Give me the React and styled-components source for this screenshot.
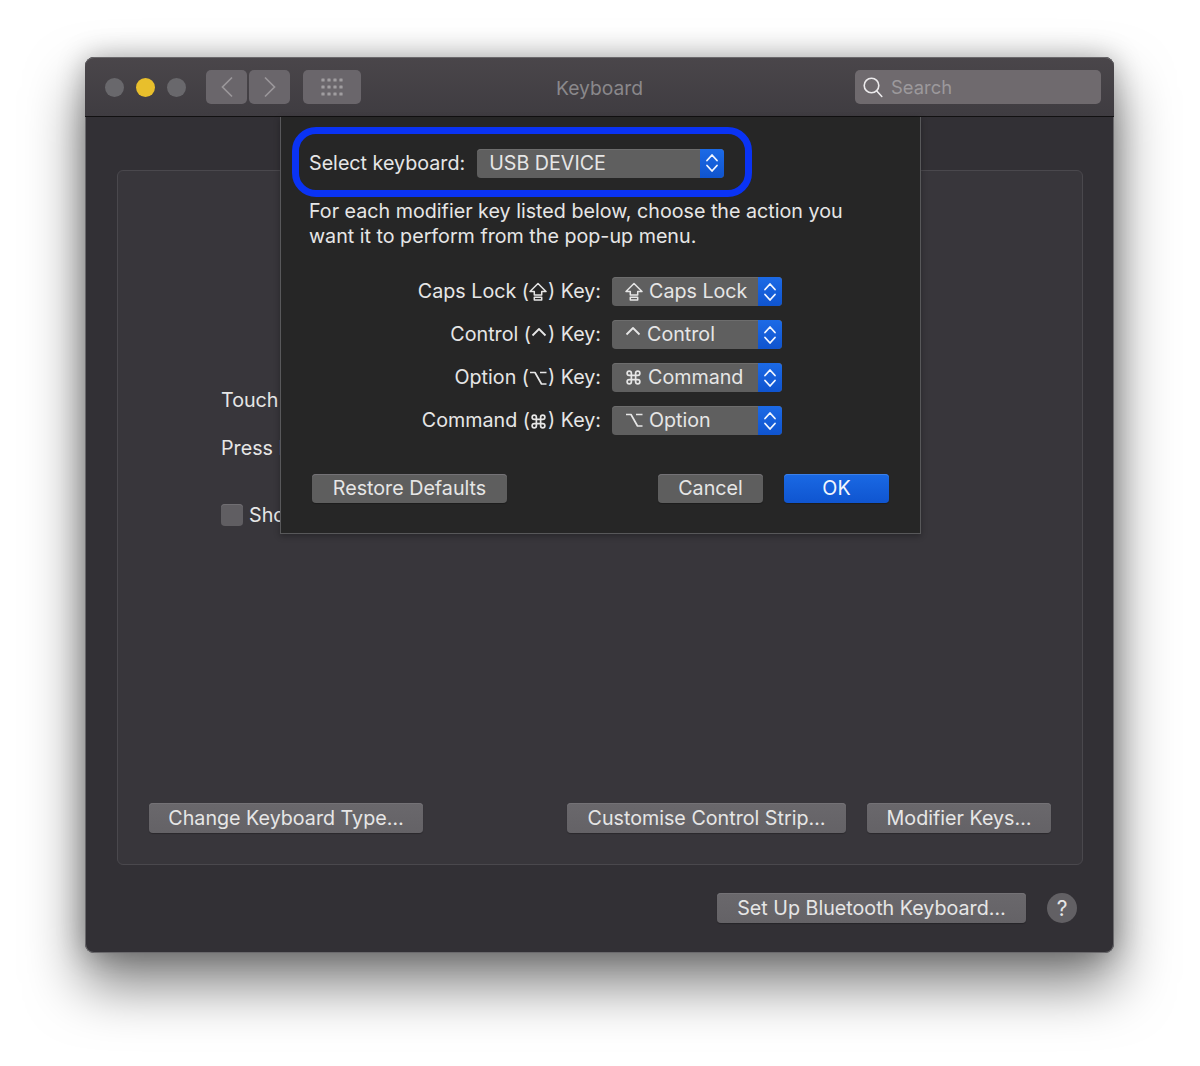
import React from "react";
import styled, { createGlobalStyle } from "styled-components";

const Global = createGlobalStyle`
  html, body { margin: 0; padding: 0; background: #fff; }
  body { font-family: Inter, "Noto Sans", "DejaVu Sans", sans-serif; -webkit-font-smoothing: antialiased; }
`;
const Page = styled.div`
  width: 1200px; height: 1066px; padding: 57px 0 0 85px; box-sizing: border-box; overflow: hidden;
`;
const Window = styled.div`
  position: relative; width: 1029px; height: 896px; box-sizing: border-box;
  display: flex; flex-direction: column;
  border-radius: 9px; background: #323035;
  box-shadow: 0 0 0 1px #6a696c inset, 0 30px 55px 2px rgba(0,0,0,.5), 0 0 28px rgba(0,0,0,.28);
  color: #e6e6e6; font-size: 19.7px;
`;
const TitleBar = styled.div`
  height: 60px; box-sizing: border-box; flex: none; position: relative;
  display: flex; align-items: center; padding: 1px 13px 0 20px;
  background: linear-gradient(180deg, #4a464a 0%, #3f3c41 100%);
  border-radius: 9px 9px 0 0; border-bottom: 1px solid #121112;
  box-shadow: inset 0 1px 0 #6a686b;
`;
const Lights = styled.div`display: flex; gap: 12px; margin-right: 20px;`;
const Light = styled.span`
  width: 19px; height: 19px; border-radius: 50%; background: ${p => p.$c};
`;
const NavGroup = styled.div`display: flex; gap: 2px; margin-right: 13px;`;
const ToolButton = styled.div`
  width: ${p => p.$w}px; height: 34px; border-radius: 5px; background: #6a666b;
  display: flex; align-items: center; justify-content: center;
`;
const Title = styled.div`
  position: absolute; left: 0; right: 0; top: 2px; bottom: 0; display: flex; align-items: center; justify-content: center;
  color: #8a888b; font-size: 19.3px; pointer-events: none;
`;
const SearchBox = styled.div`
  margin-left: auto; width: 246px; height: 34px; box-sizing: border-box; padding-left: 8px; border-radius: 5px; background: #6f6a6e;
  display: flex; align-items: center; gap: 8px; color: #9c999c; font-size: 18.4px;
`;
const Body = styled.div`flex: 1; padding: 53px 31px 0 32px; display: flex; flex-direction: column;`;
const Panel = styled.div`
  height: 695px; box-sizing: border-box; padding: 217px 31px 31px; flex: none;
  display: flex; flex-direction: column; border-radius: 6px;
  background: #38363b; border: 1px solid #4a484d;
`;
const SettingRow = styled.div`
  display: flex; align-items: center; gap: 6px; height: 24px; margin: ${p => p.$mt}px 0 0 72px; white-space: nowrap;
`;
const Checkbox = styled.span`
  width: 22px; height: 22px; border-radius: 4px; background: #605e62; box-shadow: inset 0 1px 0 #706e72;
`;
const ButtonRow = styled.div`display: flex; gap: 21px; margin-top: auto;`;
const Btn = styled.div`
  width: ${p => p.$w}px; height: ${p => p.$h || 30}px; flex: none; margin-left: ${p => p.$ml || 0};
  box-sizing: border-box; padding-bottom: ${p => p.$h ? 1 : 0}px;
  display: flex; align-items: center; justify-content: center; border-radius: 4px; white-space: nowrap;
  background: ${p => p.$primary ? "linear-gradient(180deg,#1a69e4,#0f55d0)" : p.$onDialog ? "#5e5e5e" : "linear-gradient(180deg,#6a686c,#646266)"};
  color: ${p => p.$primary ? "#f4f7fd" : "#e6e6e6"};
  box-shadow: inset 0 1px 0 ${p => p.$primary ? "#3b80ea" : "#747276"}, 0 1px 1px rgba(0,0,0,.25);
`;
const Footer = styled.div`display: flex; justify-content: flex-end; align-items: center; gap: 21px; margin-top: 28px; padding-right: 6px;`;
const Help = styled.div`
  width: 30px; height: 30px; border-radius: 50%; background: #626064; color: #e6e6e6;
  display: flex; align-items: center; justify-content: center; font-size: 21px;
`;
const Sheet = styled.div`
  position: absolute; left: 195px; top: 60px; width: 641px; height: 417px; box-sizing: border-box;
  background: #262626; border: 1px solid #58585a; border-top: none;
  padding: 10px 0 0 11px; display: flex; flex-direction: column;
  box-shadow: 0 2px 6px rgba(0,0,0,.3);
`;
const Highlight = styled.div`
  width: 460px; height: 70px; box-sizing: border-box; border: 7px solid #0a33f4; border-radius: 24px;
  display: flex; align-items: center; padding: 2px 0 0 10px; gap: 12px; white-space: nowrap;
`;
const Intro = styled.div`margin: 2px 0 0 17px; line-height: 25px; white-space: nowrap;`;
const MapList = styled.div`display: flex; flex-direction: column; gap: 14px; margin: 28px 0 0 0; width: 490px;`;
const MapRow = styled.div`display: flex; justify-content: flex-end; align-items: center; gap: 11px; white-space: nowrap;`;
const MapLabel = styled.span`padding-bottom: 2px;`;
const Select = styled.div`
  width: ${p => p.$w}px; height: 29px; flex: none; display: flex; border-radius: 4px; overflow: hidden;
  background: #5f5f5f; box-shadow: inset 0 1px 0 #6d6d6d;
`;
const SelectValue = styled.div`
  flex: 1; display: flex; align-items: center; gap: 6px; box-sizing: border-box;
  padding: 0 0 ${p => p.$pb || 0}px ${p => p.$pl}px; white-space: nowrap;
`;
const SelectArrows = styled.div`
  width: 24px; flex: none; background: linear-gradient(180deg,#1c6ae6,#0f54cf);
  display: flex; align-items: center; justify-content: center;
`;
const InlineKey = styled.span`display: inline-block; vertical-align: -3px; margin: 0 1px 0 0; line-height: 0;`;
const SheetActions = styled.div`display: flex; gap: 21px; margin: 39px 0 0 20px;`;

const Chevrons = () => (
  <svg width="14" height="24" viewBox="0 0 14 24" fill="none" stroke="#f2f6ff" strokeWidth="1.8" strokeLinecap="round" strokeLinejoin="round">
    <path d="M2 9.5 7 4l5 5.5" /><path d="M2 14.5 7 20l5-5.5" />
  </svg>
);
const GridIcon = () => (
  <svg width="24" height="18" viewBox="0 0 24 18" fill="#a09da0">
    {[2, 9, 16].flatMap(y => [3, 9, 15, 21].map(x => <rect key={x + "-" + y} x={x - 1.6} y={y - 1.6} width="3.2" height="3.2" rx=".5" />))}
  </svg>
);
const KeyIcon = ({ kind }) => {
  const common = { fill: "none", stroke: "#e6e6e6", strokeLinejoin: "round" };
  if (kind === "caps") return (
    <svg width="18" height="19" viewBox="0 0 18 19" {...common} strokeWidth="1.5" role="img" aria-label="Caps Lock">
      <path d="M9 1.5 17 9.5H12.7V13H5.3V9.5H1Z" /><rect x="5.3" y="15.3" width="7.4" height="2.7" />
    </svg>
  );
  if (kind === "ctrl") return (
    <svg width="16" height="18" viewBox="0 0 16 18" {...common} strokeWidth="1.8" role="img" aria-label="Control">
      <path d="M1.5 9.5 8 3l6.500 6.500" />
    </svg>
  );
  if (kind === "opt") return (
    <svg width="18" height="18" viewBox="0 0 18 18" {...common} strokeWidth="1.7" role="img" aria-label="Option">
      <path d="M1 3.500H6L12.500 15H17.500M11 3.500H17.500" />
    </svg>
  );
  return (
    <svg width="17" height="17" viewBox="0 0 24 24" {...common} strokeWidth="2.400" role="img" aria-label="Command">
      <path d="M15 6v12a3 3 0 1 0 3-3H6a3 3 0 1 0 3 3V6a3 3 0 1 0-3 3h12a3 3 0 1 0-3-3" />
    </svg>
  );
};

const maps = [
  ["Caps Lock", "caps", "caps", "Caps Lock"],
  ["Control", "ctrl", "ctrl", "Control"],
  ["Option", "opt", "cmd", "Command"],
  ["Command", "cmd", "opt", "Option"],
];

export default function App() {
  return (
    <Page>
      <Global />
      <Window>
        <TitleBar>
          <Lights>
            <Light $c="#69686c" /><Light $c="#e8bf2c" /><Light $c="#69686c" />
          </Lights>
          <NavGroup>
            <ToolButton $w={41}>
              <svg width="12" height="22" viewBox="0 0 12 22" fill="none" stroke="#9a979a" strokeWidth="1.700"><path d="M11 1.500 1.500 11l9.500 9.500" /></svg>
            </ToolButton>
            <ToolButton $w={41}>
              <svg width="12" height="22" viewBox="0 0 12 22" fill="none" stroke="#9a979a" strokeWidth="1.700"><path d="M1 1.500 10.500 11 1 20.500" /></svg>
            </ToolButton>
          </NavGroup>
          <ToolButton $w={58}><GridIcon /></ToolButton>
          <Title>Keyboard</Title>
          <SearchBox>
            <svg width="20" height="21" viewBox="0 0 20 21" fill="none" stroke="#eceaec" strokeWidth="1.600" strokeLinecap="round">
              <circle cx="8.500" cy="8.500" r="7.300" /><path d="m13.800 14 5 5.500" />
            </svg>
            Search
          </SearchBox>
        </TitleBar>
        <Body>
          <Panel>
            <SettingRow $mt={0}>Touch Bar shows:</SettingRow>
            <SettingRow $mt={24}>Press Fn key to:</SettingRow>
            <SettingRow $mt={43}><Checkbox />Show</SettingRow>
            <ButtonRow>
              <Btn $w={274}>Change Keyboard Type…</Btn>
              <Btn $w={279} $ml="auto">Customise Control Strip…</Btn>
              <Btn $w={184}>Modifier Keys…</Btn>
            </ButtonRow>
          </Panel>
          <Footer>
            <Btn $w={309}>Set Up Bluetooth Keyboard…</Btn>
            <Help>?</Help>
          </Footer>
        </Body>
        <Sheet>
          <Highlight>
            Select keyboard:
            <Select $w={247}>
              <SelectValue $pl={12}>USB DEVICE</SelectValue>
              <SelectArrows><Chevrons /></SelectArrows>
            </Select>
          </Highlight>
          <Intro>
            For each modifier key listed below, choose the action you<br />
            want it to perform from the pop-up menu.
          </Intro>
          <MapList>
            {maps.map(([name, labelKey, valueKey, value]) => (
              <MapRow key={name}>
                <MapLabel>{name} (<InlineKey><KeyIcon kind={labelKey} /></InlineKey>) Key:</MapLabel>
                <Select $w={170}>
                  <SelectValue $pl={13} $pb={1}><KeyIcon kind={valueKey} />{value}</SelectValue>
                  <SelectArrows><Chevrons /></SelectArrows>
                </Select>
              </MapRow>
            ))}
          </MapList>
          <SheetActions>
            <Btn $w={195} $h={29} $onDialog>Restore Defaults</Btn>
            <Btn $w={105} $h={29} $onDialog $ml="130px">Cancel</Btn>
            <Btn $w={105} $h={29} $primary>OK</Btn>
          </SheetActions>
        </Sheet>
      </Window>
    </Page>
  );
}
